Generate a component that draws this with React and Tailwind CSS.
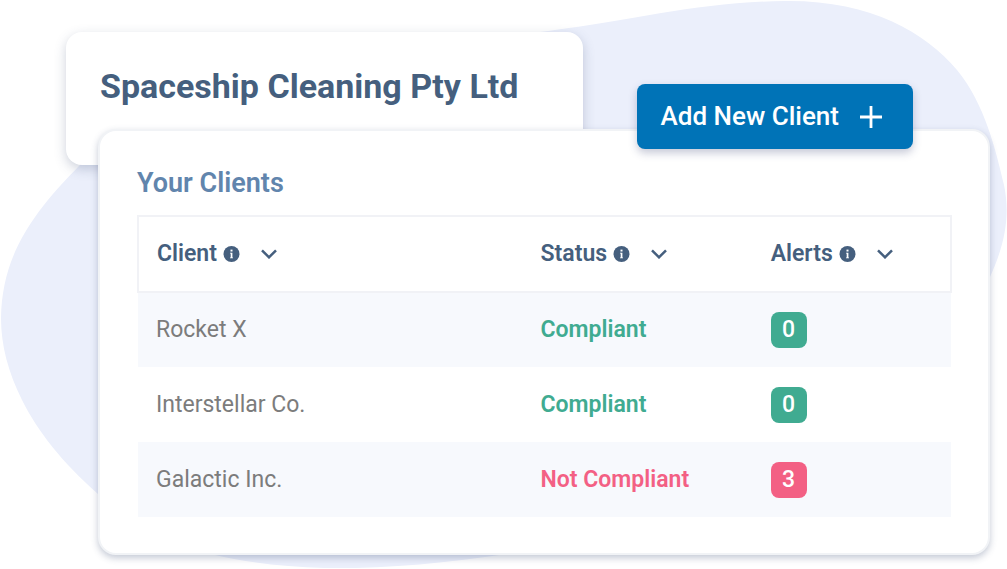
import React from "react";

const columns = [
  { label: "Client", width: "w-[47.3%]" },
  { label: "Status", width: "w-[28.3%]" },
  { label: "Alerts", width: "w-[24.4%]" },
];

const clients = [
  { name: "Rocket X", compliant: true, alerts: 0 },
  { name: "Interstellar Co.", compliant: true, alerts: 0 },
  { name: "Galactic Inc.", compliant: false, alerts: 3 },
];

function InfoIcon() {
  return (
    <svg className="size-[17px]" viewBox="0 0 17 17" aria-hidden="true">
      <circle cx="8.5" cy="8" r="8" fill="currentColor" />
      <rect x="7.5" y="3.6" width="2" height="1.9" fill="white" />
      <path d="M7 6.7H9.4V11.5H10V12.2H7V11.5H7.7V7.5H7Z" fill="white" />
    </svg>
  );
}

function ChevronIcon() {
  return (
    <svg className="h-[10px] w-4" viewBox="0 0 16 10" fill="none" aria-hidden="true">
      <path d="M1 1.3L8 8.3L15 1.3" stroke="currentColor" strokeWidth="2.5" />
    </svg>
  );
}

function PlusIcon() {
  return (
    <svg className="size-6" viewBox="0 0 24 24" fill="none" aria-hidden="true">
      <path d="M12 1V23M1 12H23" stroke="currentColor" strokeWidth="2.8" />
    </svg>
  );
}

function Backdrop() {
  return (
    <svg
      className="absolute inset-0 -z-10 size-full"
      viewBox="0 0 1007 569"
      preserveAspectRatio="none"
      aria-hidden="true"
    >
      <path
        d="M785 1C870 0 925 32 957 70C985 104 996 151 1004 185C1010 214 1006 242 990 277C950 365 800 490 640 529C520 555 420 569 325 568C285 567 250 563 215 555C170 540 130 520 98 494C62 462 38 432 22 400C8 372 1 345 1 318C2 262 25 220 80 165C180 70 300 62 548 31C640 19 700 2 785 1Z"
        fill="#ebeffb"
      />
    </svg>
  );
}

function StatusRow({ client }) {
  const text = client.compliant ? "text-[#40ab91]" : "text-[#f36084]";
  const badge = client.compliant ? "bg-[#40ab91]" : "bg-[#f36084]";
  return (
    <tr className="h-[75px] odd:bg-[#f7f9fd]">
      <td className="pl-[18px] text-[#7c7c7c]">{client.name}</td>
      <td className={`pl-[18px] font-semibold ${text}`}>
        {client.compliant ? "Compliant" : "Not Compliant"}
      </td>
      <td className="pl-[18px]">
        <span className={`flex size-9 items-center justify-center rounded-lg font-medium text-white ${badge}`}>
          {client.alerts}
        </span>
      </td>
    </tr>
  );
}

export default function App() {
  return (
    <main className="relative isolate min-h-screen bg-white pt-8 pr-[17px] pb-3 pl-[66px] font-[Roboto,sans-serif]">
      <Backdrop />
      <header className="w-fit rounded-2xl bg-white pt-8 pr-[65px] pb-[57px] pl-[34px] shadow-[0_4px_12px_rgba(60,75,115,0.25)]">
        <h1 className="text-[34px] leading-[44px] font-bold text-[#455f7e]">
          Spaceship Cleaning Pty Ltd
        </h1>
      </header>

      <section className="relative -mt-9 ml-8 rounded-[18px] border-2 border-[#f1f3f6] bg-white pt-9 pr-9 pb-9 pl-[37px] shadow-[0_3px_7px_rgba(60,75,115,0.3)]">
        <button
          type="button"
          className="absolute -top-[47px] right-[75px] flex h-[65px] items-center gap-5 rounded-lg bg-[#0073b7] pr-[30px] pl-6 text-[26px] font-medium text-white shadow-[0_4px_8px_rgba(50,60,110,0.28)]"
        >
          Add New Client
          <PlusIcon />
        </button>

        <h2 className="text-[27px] leading-8 font-semibold text-[#6185ad]">Your Clients</h2>

        <table className="mt-4 w-full table-fixed border-collapse text-left text-[23px] leading-7">
          <thead>
            <tr className="h-[76px] border-2 border-[#f1f2f6] text-[#455f7e]">
              {columns.map((column) => (
                <th key={column.label} scope="col" className={`pl-[18px] font-semibold ${column.width}`}>
                  <button type="button" className="flex items-center">
                    <span className="mr-[6px]">{column.label}</span>
                    <InfoIcon />
                    <span className="ml-[21px]">
                      <ChevronIcon />
                    </span>
                  </button>
                </th>
              ))}
            </tr>
          </thead>
          <tbody>
            {clients.map((client) => (
              <StatusRow key={client.name} client={client} />
            ))}
          </tbody>
        </table>
      </section>
    </main>
  );
}
